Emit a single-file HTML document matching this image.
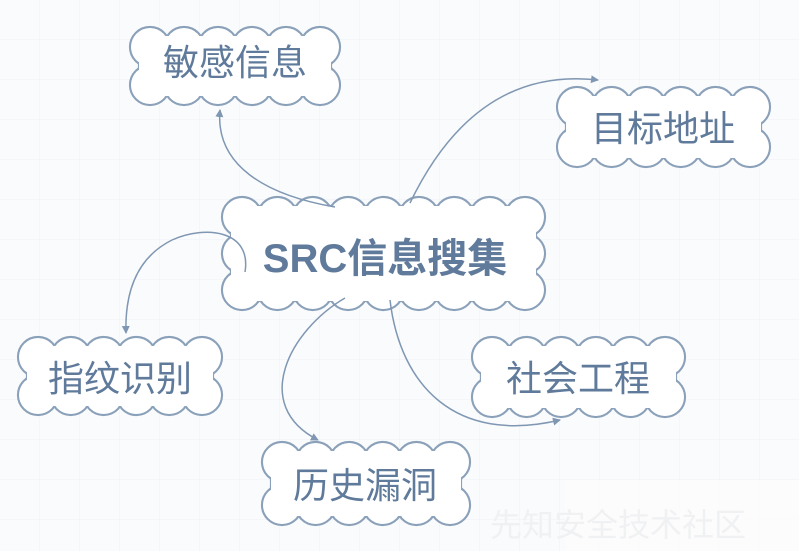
<!DOCTYPE html>
<html><head><meta charset="utf-8"><style>
html,body{margin:0;padding:0;width:799px;height:551px;overflow:hidden;background:#fafbfd}
svg{display:block}
text{font-family:"Liberation Sans","Noto Sans CJK SC",sans-serif;fill:#5f7a9a}
</style></head><body>
<svg id="s" width="799" height="551" xmlns="http://www.w3.org/2000/svg">
<defs>
<pattern id="g" width="40" height="40" patternUnits="userSpaceOnUse"><path d="M40 0V40M0 40H40" stroke="#eef1f5" stroke-width="1" fill="none"/></pattern>
<marker id="a" markerWidth="10" markerHeight="10" refX="7" refY="4" orient="auto" markerUnits="userSpaceOnUse"><path d="M0,0 L8,4 L0,8 z" fill="#7f97b3"/></marker>
</defs>
<rect width="799" height="551" fill="url(#g)"/>
<g id="clouds"></g>
<g fill="none" stroke="#7f97b3" stroke-width="1.5">
<path d="M335,207 C265,195 215,165 220,110" marker-end="url(#a)"/>
<path d="M410,203 C450,120 510,70 598,80" marker-end="url(#a)"/>
<path d="M245,272 C252,230 205,225 172,240 C132,260 125,300 126,333" marker-end="url(#a)"/>
<path d="M345,298 C290,330 250,405 318,440" marker-end="url(#a)"/>
<path d="M390,300 C400,385 455,445 560,420" marker-end="url(#a)"/>
</g>
<g id="labels">
<text x="235" y="75" font-size="36" text-anchor="middle">敏感信息</text>
<text x="663" y="141" font-size="36" text-anchor="middle">目标地址</text>
<text x="385" y="272" font-size="40" font-weight="bold" text-anchor="middle">SRC信息搜集</text>
<text x="120" y="391" font-size="36" text-anchor="middle">指纹识别</text>
<text x="578" y="391" font-size="36" text-anchor="middle">社会工程</text>
<text x="365" y="498" font-size="36" text-anchor="middle">历史漏洞</text>
</g>
<rect x="565" y="480" width="234" height="71" fill="#fdfdfd" opacity="0.8"/>
<text x="490" y="536" font-size="32" style="fill:#f0f1f3">先知安全技术社区</text>
</svg>
<script>
var boxes=[[130,27,210,78],[557,87,213,80],[222,197,323,113],[18,337,204,78],[472,337,213,80],[262,442,208,83]];
var g=document.getElementById('clouds'),out='',inn='';
boxes.forEach(function(b){
 var x=b[0],y=b[1],w=b[2],h=b[3],r=20,d=r*0.55;
 var ix=x+r,iy=y+d,iw=w-2*r,ih=h-2*d,pts=[];
 var jx=x+d,jy=y+r,jw=w-2*d,jh=h-2*r;
 var nx=Math.max(2,Math.round(iw/(r*1.7))),ny=Math.max(1,Math.round(jh/(r*1.5)));
 for(var i=0;i<=nx;i++){pts.push([ix+iw*i/nx,y+r]);pts.push([ix+iw*i/nx,y+h-r]);}
 for(var j=0;j<=ny;j++){pts.push([x+r,jy+jh*j/ny]);pts.push([x+w-r,jy+jh*j/ny]);}
 pts=[];
 for(var i=0;i<=nx;i++){pts.push([ix+iw*i/nx,y+r]);pts.push([ix+iw*i/nx,y+h-r]);}
 for(var j=1;j<ny;j++){pts.push([x+r,jy+jh*j/ny]);pts.push([x+w-r,jy+jh*j/ny]);}
 pts.forEach(function(p){
  out+='<circle cx="'+p[0]+'" cy="'+p[1]+'" r="'+r+'" fill="#fff" stroke="#8ba1ba" stroke-width="2.2"/>';
  inn+='<circle cx="'+p[0]+'" cy="'+p[1]+'" r="'+(r-1.1)+'" fill="#fff"/>';
 });
 inn+='<rect x="'+(x+r)+'" y="'+(y+r*0.45)+'" width="'+(w-2*r)+'" height="'+(h-r*0.9)+'" rx="6" fill="#fff"/>';
 inn+='<rect x="'+(x+r*0.45)+'" y="'+(y+r)+'" width="'+(w-r*0.9)+'" height="'+(h-2*r)+'" rx="6" fill="#fff"/>';
 out+='<rect x="'+(x+r)+'" y="'+(y+r*0.45)+'" width="'+(w-2*r)+'" height="'+(h-r*0.9)+'" fill="#fff" stroke="#8ba1ba" stroke-width="2.2"/>';
 out+='<rect x="'+(x+r*0.45)+'" y="'+(y+r)+'" width="'+(w-r*0.9)+'" height="'+(h-2*r)+'" fill="#fff" stroke="#8ba1ba" stroke-width="2.2"/>';
});
g.innerHTML=out+inn;
</script>
</body></html>
